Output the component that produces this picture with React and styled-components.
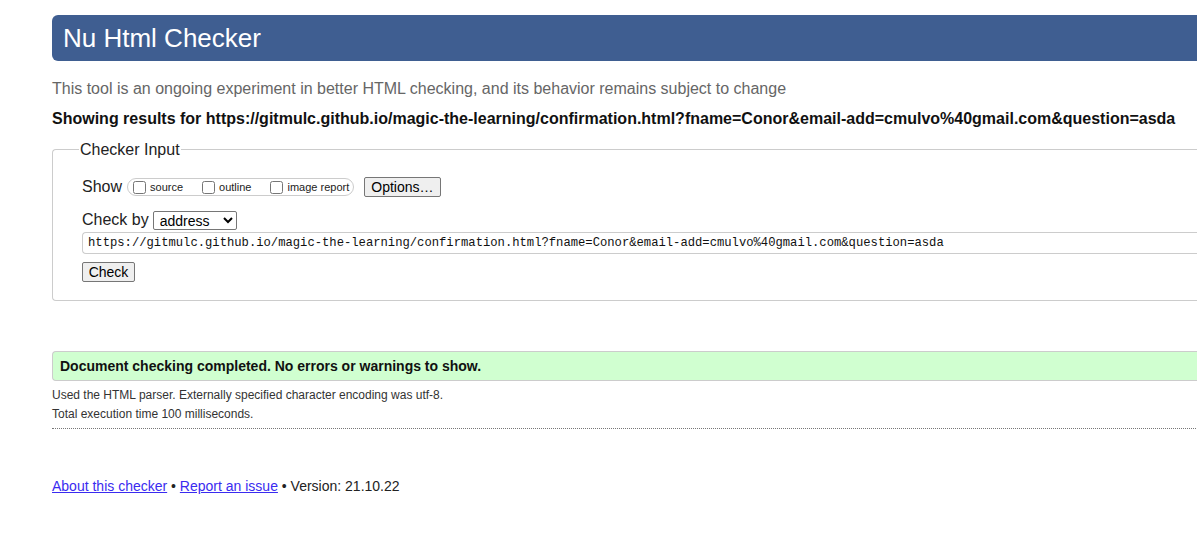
import React, { useState } from 'react';
import styled, { createGlobalStyle } from 'styled-components';

const GlobalStyle = createGlobalStyle`
    html, body {
        margin: 0;
        padding: 0;
        background: #fff;
        overflow: hidden;
    }
    body {
        font-family: "Liberation Sans", Arial, sans-serif;
        color: #000;
    }
`;

const Page = styled.div`
    width: 1300px;
    padding: 15px 0 40px 52px;
    box-sizing: border-box;
`;

const Header = styled.h1`
    margin: 0;
    height: 46px;
    line-height: 46px;
    padding-left: 11px;
    background: #3f5e91;
    border-radius: 6px 0 0 6px;
    color: #fff;
    font-size: 26px;
    font-weight: normal;
`;

const Intro = styled.p`
    margin: 18px 0 0;
    font-size: 16px;
    line-height: 19px;
    color: #666;
`;

const Results = styled.p`
    margin: 11px 0 0;
    font-size: 16px;
    line-height: 19px;
    font-weight: bold;
    color: #111;
`;

const Fieldset = styled.fieldset`
    margin: 12px 0 0;
    padding: 18px 0 18px 29px;
    border: 1px solid #ccc;
    border-right: none;
    border-radius: 4px 0 0 4px;
`;

const Legend = styled.legend`
    padding: 0 1px;
    margin-left: -3px;
    font-size: 16px;
    line-height: 19px;
    color: #222;
`;

const Row = styled.div`
    display: flex;
    align-items: center;
    height: 20px;
    margin-top: ${p => p.$top || 0}px;
    font-size: 16px;
    color: #222;
`;

const Group = styled.span`
    display: flex;
    align-items: center;
    height: 16px;
    margin-left: 5px;
    padding: 0 4px 0 5px;
    border: 1px solid #ccc;
    border-radius: 9px;
`;

const Option = styled.label`
    display: flex;
    align-items: center;
    font-size: 11px;
    margin-right: ${p => p.$gap || 0}px;
    color: #222;

    input {
        width: 13px;
        height: 13px;
        margin: 0 4px 0 0;
    }
`;

const Button = styled.button`
    font-family: "Liberation Sans", Arial, sans-serif;
    font-size: 14px;
    height: 20px;
    padding: 0 6px;
    margin-left: ${p => p.$left || 0}px;
    background: #efefef;
    border: 1px solid #767676;
    border-radius: 2px;
    color: #000;
`;

const Select = styled.select`
    margin-left: 4px;
    width: 84px;
    height: 19px;
    font-family: "Liberation Sans", Arial, sans-serif;
    font-size: 14px;
    padding: 0 0 0 2px;
    border: 1px solid #767676;
    border-radius: 2px;
    background: #fff;
    color: #000;
`;

const UrlInput = styled.input`
    display: block;
    box-sizing: border-box;
    width: 100%;
    height: 22px;
    margin-top: 2px;
    padding: 0 5px;
    border: 1px solid #ccc;
    border-right: none;
    border-radius: 4px 0 0 4px;
    font-family: "Liberation Mono", "DejaVu Sans Mono", monospace;
    font-size: 12.2px;
    color: #111;
`;

const CheckButton = styled(Button)`
    display: block;
    margin-top: 8px;
    width: 53px;
    padding: 0;
`;

const Success = styled.div`
    margin-top: 50px;
    height: 28px;
    line-height: 28px;
    padding-left: 7px;
    background: #d0ffd0;
    border: 1px solid #ccc;
    border-right: none;
    border-radius: 4px 0 0 4px;
    font-size: 14px;
    font-weight: bold;
    color: #111;
`;

const Detail = styled.p`
    margin: ${p => p.$top || 0}px 0 0;
    font-size: 12px;
    line-height: 19px;
    color: #333;
`;

const Rule = styled.hr`
    margin: 4px 0 0;
    border: none;
    border-top: 1px dotted #777;
    height: 0;
`;

const Footer = styled.p`
    margin: 49px 0 0;
    font-size: 14px;
    line-height: 17px;
    color: #222;

    a {
        color: #3a2bf0;
        text-decoration: underline;
    }
`;

const url = 'https://gitmulc.github.io/magic-the-learning/confirmation.html?fname=Conor&email-add=cmulvo%40gmail.com&question=asda';

export default function App() {
    const [doc, setDoc] = useState(url);
    return (
        <>
            <GlobalStyle />
            <Page>
                <Header>Nu Html Checker</Header>
                <Intro>This tool is an ongoing experiment in better HTML checking, and its behavior remains subject to change</Intro>
                <Results>Showing results for {url}</Results>
                <Fieldset>
                    <Legend>Checker Input</Legend>
                    <Row>
                        Show
                        <Group>
                            <Option $gap={19}><input type="checkbox" />source</Option>
                            <Option $gap={19}><input type="checkbox" />outline</Option>
                            <Option><input type="checkbox" />image report</Option>
                        </Group>
                        <Button $left={10}>Options…</Button>
                    </Row>
                    <Row $top={13}>
                        Check by
                        <Select defaultValue="address">
                            <option value="address">address</option>
                            <option value="file">file upload</option>
                            <option value="text">text input</option>
                        </Select>
                    </Row>
                    <UrlInput value={doc} onChange={e => setDoc(e.target.value)} />
                    <CheckButton>Check</CheckButton>
                </Fieldset>
                <Success>Document checking completed. No errors or warnings to show.</Success>
                <Detail $top={5}>Used the HTML parser. Externally specified character encoding was utf-8.</Detail>
                <Detail>Total execution time 100 milliseconds.</Detail>
                <Rule />
                <Footer>
                    <a href="#about">About this checker</a> • <a href="#issue">Report an issue</a> • Version: 21.10.22
                </Footer>
            </Page>
        </>
    );
}
